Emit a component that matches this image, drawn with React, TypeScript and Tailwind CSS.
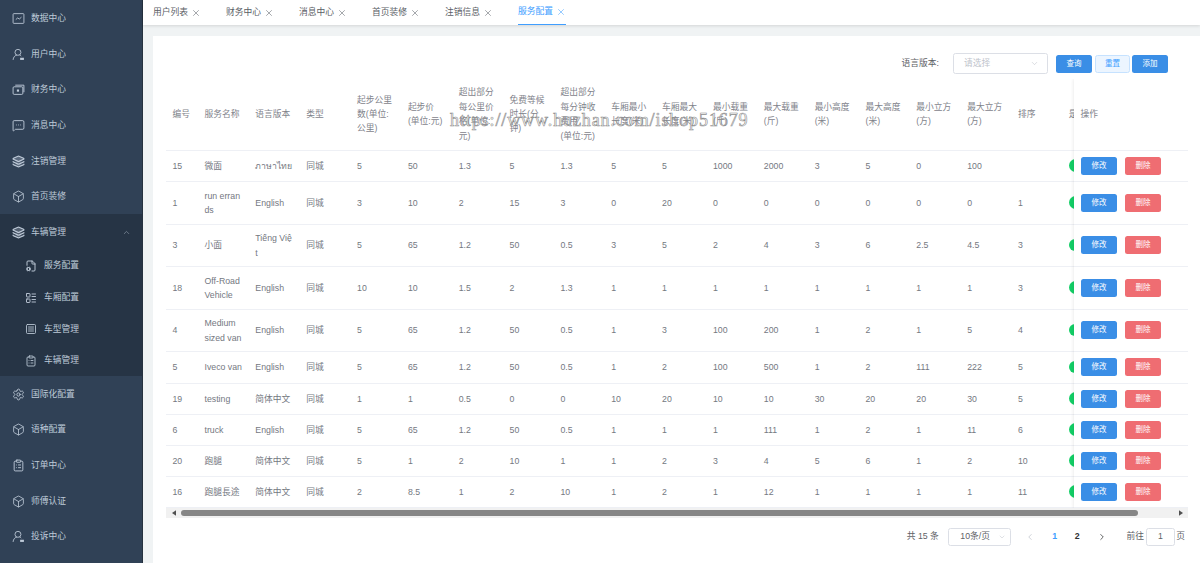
import React from "react";
import { Settings, Box, Layers, ClipboardList, MessageSquareMore, ChevronUp, ChevronDown, ChevronLeft, ChevronRight, X, LayoutList, FileCog, SquareMenu } from "lucide-react";

const ic = "w-[13px] h-[13px]";
const sub = "w-[12px] h-[12px]";

const UserIcon = () => (
  <svg viewBox="0 0 24 24" className={ic} fill="none" stroke="currentColor" strokeWidth="1.6">
    <circle cx="11" cy="8" r="5.5" />
    <path d="M2 22c.5-5 3-8 7-9M14 13c1.2.4 2.2 1 3 2" />
    <rect x="15" y="18" width="7" height="4" fill="currentColor" stroke="none" />
  </svg>
);
const DataIcon = () => (
  <svg viewBox="0 0 24 24" className={ic} fill="none" stroke="currentColor" strokeWidth="1.6">
    <rect x="2" y="3" width="20" height="18" rx="1.5" />
    <path d="M7 14l3.5-3 3 2 4-3.5" />
  </svg>
);
const MoneyIcon = () => (
  <svg viewBox="0 0 24 24" className={ic} fill="none" stroke="currentColor" strokeWidth="1.7">
    <rect x="2" y="7" width="18" height="14" rx="2" />
    <path d="M6 4h16v13" />
    <rect x="9" y="12" width="4" height="4" fill="currentColor" stroke="none" />
  </svg>
);
const LayerIcon = () => <Layers className={ic} strokeWidth={2.2} fill="currentColor" fillOpacity={0.3} />;

const top1 = [
  { t: "数据中心", i: <DataIcon /> },
  { t: "用户中心", i: <UserIcon /> },
  { t: "财务中心", i: <MoneyIcon /> },
  { t: "消息中心", i: <MessageSquareMore className={ic} strokeWidth={1.7} /> },
  { t: "注销管理", i: <LayerIcon /> },
  { t: "首页装修", i: <Box className={ic} strokeWidth={1.5} /> },
];
const subs = [
  { t: "服务配置", i: <FileCog className={sub} strokeWidth={1.9} /> },
  { t: "车厢配置", i: <LayoutList className={sub} strokeWidth={1.8} /> },
  { t: "车型管理", i: <SquareMenu className={sub} strokeWidth={1.7} /> },
  { t: "车辆管理", i: <ClipboardList className={sub} strokeWidth={1.7} /> },
];
const top2 = [
  { t: "国际化配置", i: <Settings className={ic} strokeWidth={1.6} /> },
  { t: "语种配置", i: <Box className={ic} strokeWidth={1.5} /> },
  { t: "订单中心", i: <ClipboardList className={ic} strokeWidth={1.7} /> },
  { t: "师傅认证", i: <Box className={ic} strokeWidth={1.5} /> },
  { t: "投诉中心", i: <UserIcon /> },
];

const tabs = ["用户列表", "财务中心", "消息中心", "首页装修", "注销信息", "服务配置"];

const headers = [
  "编号", "服务名称", "语言版本", "类型", "起步公里\n数(单位:\n公里)", "起步价\n(单位:元)",
  "超出部分\n每公里价\n格(单位:\n元)", "免费等候\n时长(分\n钟)", "超出部分\n每分钟收\n费用\n(单位:元)",
  "车厢最小\n长度(米)", "车厢最大\n长度(米)", "最小载重\n(斤)", "最大载重\n(斤)", "最小高度\n(米)", "最大高度\n(米)",
  "最小立方\n(方)", "最大立方\n(方)", "排序",
];

const rows: { h: string; c: string[] }[] = [
  { h: "h-[31px]", c: ["15", "微面", "ภาษาไทย", "同城", "5", "50", "1.3", "5", "1.3", "5", "5", "1000", "2000", "3", "5", "0", "100", ""] },
  { h: "h-[43px]", c: ["1", "run erran\nds", "English", "同城", "3", "10", "2", "15", "3", "0", "20", "0", "0", "0", "0", "0", "0", "1"] },
  { h: "h-[42px]", c: ["3", "小面", "Tiếng Việ\nt", "同城", "5", "65", "1.2", "50", "0.5", "3", "5", "2", "4", "3", "6", "2.5", "4.5", "3"] },
  { h: "h-[43px]", c: ["18", "Off-Road\nVehicle", "English", "同城", "10", "10", "1.5", "2", "1.3", "1", "1", "1", "1", "1", "1", "1", "1", "3"] },
  { h: "h-[42px]", c: ["4", "Medium\nsized van", "English", "同城", "5", "65", "1.2", "50", "0.5", "1", "3", "100", "200", "1", "2", "1", "5", "4"] },
  { h: "h-[32px]", c: ["5", "Iveco van", "English", "同城", "5", "65", "1.2", "50", "0.5", "1", "2", "100", "500", "1", "2", "111", "222", "5"] },
  { h: "h-[31px]", c: ["19", "testing", "简体中文", "同城", "1", "1", "0.5", "0", "0", "10", "20", "10", "10", "30", "20", "20", "30", "5"] },
  { h: "h-[31px]", c: ["6", "truck", "English", "同城", "5", "65", "1.2", "50", "0.5", "1", "1", "1", "111", "1", "2", "1", "11", "6"] },
  { h: "h-[31px]", c: ["20", "跑腿", "简体中文", "同城", "5", "1", "2", "10", "1", "1", "2", "3", "4", "5", "6", "1", "2", "10"] },
  { h: "h-[31px]", c: ["16", "跑腿長途", "简体中文", "同城", "2", "8.5", "1", "2", "10", "1", "2", "1", "12", "1", "1", "1", "1", "11"] },
];

function Item({ t, i }: { t: string; i: React.ReactNode }) {
  return (
    <div className="h-[35.6px] flex items-center pt-[2px] pl-[11.5px] gap-[6.5px] text-[8.75px] text-[#bfcbd9]">
      <span className="w-[13px] flex justify-center">{i}</span>
      <span>{t}</span>
    </div>
  );
}

const Btn = ({ t, cls }: { t: string; cls: string }) => (
  <button className={`h-[18px] w-[36px] rounded-[2.5px] text-[7.5px] text-white flex items-center justify-center ${cls}`}>{t}</button>
);

export default function App() {
  return (
    <div className="flex h-[563px] w-[1200px] overflow-hidden bg-[#f0f3f4] font-['Liberation_Sans','Noto_Sans_CJK_SC',sans-serif]">
      <aside className="w-[143px] shrink-0 bg-[#304156] border-r border-[#26323f]">
        {top1.map((x) => <Item key={x.t} {...x} />)}
        <div className="bg-[#263445]">
          <div className="h-[35.6px] flex items-center pt-[2px] pl-[11.5px] gap-[6.5px] text-[8.75px] text-[#bfcbd9]">
            <span className="w-[13px] flex justify-center"><LayerIcon /></span>
            <span className="flex-1">车辆管理</span>
            <ChevronUp className="w-[9px] h-[9px] mr-[11px] text-[#7f8c9b]" />
          </div>
          {subs.map((x) => (
            <div key={x.t} className="h-[31.6px] flex items-center pt-[2px] pl-[24.5px] gap-[7.5px] text-[8.75px] text-[#bfcbd9]">
              <span className="w-[12px] flex justify-center">{x.i}</span>
              <span>{x.t}</span>
            </div>
          ))}
        </div>
        {top2.map((x) => <Item key={x.t} {...x} />)}
      </aside>

      <main className="flex-1 min-w-0 flex flex-col">
        <div className="h-[25px] shrink-0 bg-white flex items-stretch pl-[10px] shadow-[0_1px_3px_rgba(0,0,0,0.12)] text-[8.75px] text-[#5a5e66]">
          {tabs.map((t, n) => (
            <div key={t} className="w-[73px] flex items-center">
              <div className={`h-full flex items-center gap-[3px] ${n === 5 ? "text-[#409eff] border-b border-[#409eff]" : ""}`}>
                <span>{t}</span>
                <X className="w-[10px] h-[10px]" strokeWidth={1.3} />
              </div>
            </div>
          ))}
        </div>

        <div className="mt-[11px] ml-[10px] flex-1 bg-white pt-[17px] pl-[13px] pr-[12px] flex flex-col min-h-0">
          <div className="h-[21px] flex items-center justify-end pr-[20px] shrink-0">
            <span className="text-[8.75px] text-[#606266] mr-[14px]">语言版本:</span>
            <div className="w-[95px] h-[21px] border border-[#dcdfe6] rounded-[2.5px] flex items-center justify-between pl-[10px] pr-[8px] mr-[8px] text-[8.75px] text-[#c0c4cc]">
              <span>请选择</span>
              <ChevronDown className="w-[9px] h-[9px]" strokeWidth={1.5} />
            </div>
            <Btn t="查询" cls="bg-[#3a8ee6]" />
            <button className="h-[18px] w-[35px] ml-[3px] rounded-[2.5px] text-[7.5px] text-[#409eff] bg-[#ecf5ff] border border-[#c6e2ff] flex items-center justify-center">重置</button>
            <Btn t="添加" cls="bg-[#3a8ee6] ml-[2px]" />
          </div>

          <div className="relative mt-[5px] overflow-hidden shrink-0">
            <table className="table-fixed w-full border-collapse text-[8.75px] leading-[14.4px] text-[#74787f]">
              <colgroup>
                <col className="w-[32px]" />
                {headers.slice(1).map((_, n) => <col key={n} className="w-[50.85px]" />)}
                <col />
              </colgroup>
              <thead>
                <tr className="h-[71px] border-b border-[#eef0f5]">
                  {headers.map((h, n) => (
                    <th key={n} className="pl-[6.5px] pr-0 font-normal text-left text-[#7f838b] whitespace-pre-line">{h}</th>
                  ))}
                  <th className="pl-[6.5px] font-normal text-left text-[#7f838b] whitespace-nowrap">是否启用</th>
                </tr>
              </thead>
              <tbody>
                {rows.map((r, n) => (
                  <tr key={n} className={`${r.h} border-b border-[#eef0f5]`}>
                    {r.c.map((v, k) => (
                      <td key={k} className="pl-[6.5px] pr-0 pt-[1px] whitespace-pre-line">{v}</td>
                    ))}
                    <td className="pl-[6.5px]"><div className="w-[25px] h-[12.5px] rounded-full bg-[#13ce66]" /></td>
                  </tr>
                ))}
              </tbody>
            </table>

            <table className="absolute right-0 top-0 w-[114px] border-collapse bg-white text-[8.75px] shadow-[-1px_0_3px_rgba(0,0,0,0.07)]">
              <thead>
                <tr className="h-[71px] border-b border-[#eef0f5]">
                  <th className="pl-[6.5px] font-normal text-left text-[#7f838b]">操作</th>
                </tr>
              </thead>
              <tbody>
                {rows.map((r, n) => (
                  <tr key={n} className={`${r.h} border-b border-[#eef0f5]`}>
                    <td className="pl-[7px]">
                      <div className="flex gap-[8px]">
                        <Btn t="修改" cls="bg-[#3a8ee6]" />
                        <Btn t="删除" cls="bg-[#ef6d72]" />
                      </div>
                    </td>
                  </tr>
                ))}
              </tbody>
            </table>

            <div className="absolute left-[284px] top-[29px] font-['Liberation_Serif',serif] text-[18px] leading-[24px] tracking-[0.9px] text-transparent [-webkit-text-stroke:0.6px_#8d8d8d] whitespace-nowrap pointer-events-none">
              https://www.huzhan.com/ishop51679
            </div>
          </div>

          <div className="h-[10px] shrink-0 bg-[#f1f1f1] flex items-center text-[#505050]">
            <span className="w-[15px] flex justify-center">
              <svg viewBox="0 0 6 8" className="w-[4px] h-[6px]" fill="currentColor"><path d="M6 0 0 4l6 4z" /></svg>
            </span>
            <div className="w-[957px] h-[6px] rounded-full bg-[#868686]" />
            <span className="flex-1 flex justify-end pr-[5px]">
              <svg viewBox="0 0 6 8" className="w-[4px] h-[6px]" fill="currentColor"><path d="M0 0l6 4-6 4z" /></svg>
            </span>
          </div>

          <div className="mt-[10px] h-[18px] flex items-center justify-end pr-[3px] text-[8.75px] text-[#606266] shrink-0">
            <span className="mr-[9.5px]">共 15 条</span>
            <div className="w-[63px] h-[18px] border border-[#dcdfe6] rounded-[2.5px] flex items-center justify-between pl-[11px] pr-[4px] mr-[13.5px]">
              <span>10条/页</span>
              <ChevronDown className="w-[8px] h-[8px] text-[#c0c4cc]" strokeWidth={1.5} />
            </div>
            <ChevronLeft className="w-[10px] h-[10px] text-[#c0c4cc] mr-[17.3px]" strokeWidth={1.8} />
            <span className="font-bold text-[#409eff] mr-[17.8px]">1</span>
            <span className="font-bold text-[#303133] mr-[16.8px]">2</span>
            <ChevronRight className="w-[10px] h-[10px] text-[#303133] mr-[20px]" strokeWidth={1.8} />
            <span>前往</span>
            <div className="w-[29px] h-[18px] ml-[2px] mr-[1.25px] border border-[#dcdfe6] rounded-[2.5px] flex items-center justify-center">1</div>
            <span>页</span>
          </div>
        </div>
      </main>
    </div>
  );
}
